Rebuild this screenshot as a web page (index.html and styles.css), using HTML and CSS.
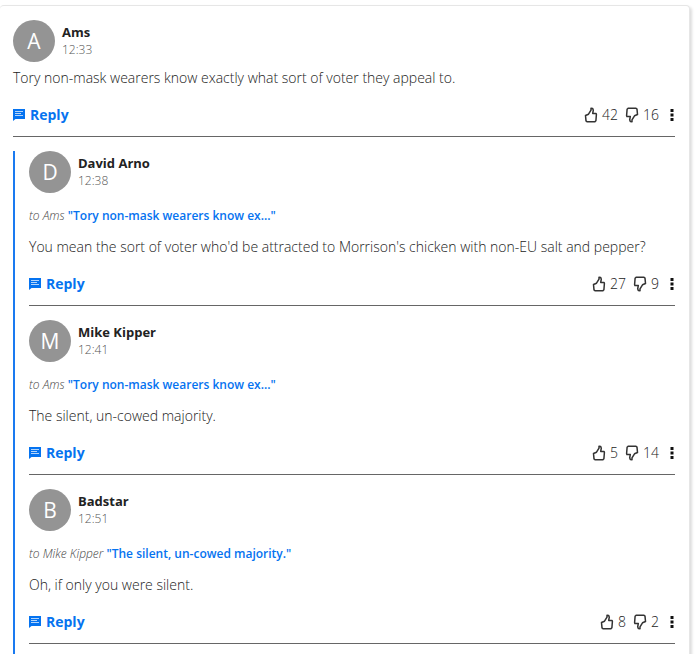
FILE: index.html
```
<!DOCTYPE html>
<html lang="en">
<head>
  <meta charset="UTF-8">
  <meta name="viewport" content="width=device-width, initial-scale=1">
  <title>Comments</title>
  <link rel="stylesheet" href="styles.css">
</head>
<body>
  <!-- shared icons -->
  <svg class="sprite" aria-hidden="true">
    <symbol id="reply" viewBox="0 0 12 12">
      <path fill="currentColor" d="M0 0h12v10H2.500L0 12z"/>
      <path stroke="#fff" stroke-width="1" stroke-opacity=".7" d="M2 2.500h8M2 4.500h6M2 6.500h8"/>
    </symbol>
    <symbol id="like" viewBox="0 0 14 16">
      <path fill="none" stroke="currentColor" stroke-width="1.500" stroke-linejoin="round" d="M1.500 8.500 4.500 7.200l2.500-4V1.300l1.700.3.600 1.600-.6 3.300h3.400l.3 1-.5 6.200-1 1.100H3l-1-.9z"/>
    </symbol>
    <symbol id="dots" viewBox="0 0 4 12">
      <path fill="currentColor" d="M.5 0h3v3h-3zM.5 4.500h3v3h-3zM.5 9h3v3h-3z"/>
    </symbol>
  </svg>

  <main class="card">
    <article class="comment">
      <header class="author">
        <span class="avatar">A</span>
        <div>
          <div class="name">Ams</div>
          <time class="time">12:33</time>
        </div>
      </header>
      <p class="text">Tory non-mask wearers know exactly what sort of voter they appeal to.</p>
      <footer class="actions">
        <button class="reply"><svg class="reply-icon"><use href="#reply"/></svg>Reply</button>
        <button class="vote" aria-label="Like, 42"><svg class="thumb"><use href="#like"/></svg>42</button>
        <button class="vote" aria-label="Dislike, 16"><svg class="thumb down"><use href="#like"/></svg>16</button>
        <button class="more" aria-label="More"><svg class="dots"><use href="#dots"/></svg></button>
      </footer>
    </article>

    <section class="replies">
      <article class="comment">
        <header class="author">
          <span class="avatar">D</span>
          <div>
            <div class="name">David Arno</div>
            <time class="time">12:38</time>
          </div>
        </header>
        <p class="quote"><em>to Ams</em> <a href="#">"Tory non-mask wearers know ex..."</a></p>
        <p class="text">You mean the sort of voter who'd be attracted to Morrison's chicken with non-EU salt and pepper?</p>
        <footer class="actions">
          <button class="reply"><svg class="reply-icon"><use href="#reply"/></svg>Reply</button>
          <button class="vote" aria-label="Like, 27"><svg class="thumb"><use href="#like"/></svg>27</button>
          <button class="vote" aria-label="Dislike, 9"><svg class="thumb down"><use href="#like"/></svg>9</button>
          <button class="more" aria-label="More"><svg class="dots"><use href="#dots"/></svg></button>
        </footer>
      </article>

      <article class="comment">
        <header class="author">
          <span class="avatar">M</span>
          <div>
            <div class="name">Mike Kipper</div>
            <time class="time">12:41</time>
          </div>
        </header>
        <p class="quote"><em>to Ams</em> <a href="#">"Tory non-mask wearers know ex..."</a></p>
        <p class="text">The silent, un-cowed majority.</p>
        <footer class="actions">
          <button class="reply"><svg class="reply-icon"><use href="#reply"/></svg>Reply</button>
          <button class="vote" aria-label="Like, 5"><svg class="thumb"><use href="#like"/></svg>5</button>
          <button class="vote" aria-label="Dislike, 14"><svg class="thumb down"><use href="#like"/></svg>14</button>
          <button class="more" aria-label="More"><svg class="dots"><use href="#dots"/></svg></button>
        </footer>
      </article>

      <article class="comment">
        <header class="author">
          <span class="avatar">B</span>
          <div>
            <div class="name">Badstar</div>
            <time class="time">12:51</time>
          </div>
        </header>
        <p class="quote"><em>to Mike Kipper</em> <a href="#">"The silent, un-cowed majority."</a></p>
        <p class="text">Oh, if only you were silent.</p>
        <footer class="actions">
          <button class="reply"><svg class="reply-icon"><use href="#reply"/></svg>Reply</button>
          <button class="vote" aria-label="Like, 8"><svg class="thumb"><use href="#like"/></svg>8</button>
          <button class="vote" aria-label="Dislike, 2"><svg class="thumb down"><use href="#like"/></svg>2</button>
          <button class="more" aria-label="More"><svg class="dots"><use href="#dots"/></svg></button>
        </footer>
      </article>
    </section>
  </main>
</body>
</html>
```
FILE: styles.css
```
* { box-sizing: border-box; }
body {
  margin: 0;
  padding: 5px 10px 0 0;
  background: #fff;
  color: #222;
  font: 300 14px/20px "Open Sans", "Noto Sans", sans-serif;
}
p { margin: 0; }
button { padding: 0; border: 0; background: none; color: inherit; font: inherit; cursor: pointer; }
.sprite { display: none; }

.card {
  padding: 14px 14px 14px 13px;
  border: 1px solid #e6e6e6;
  border-left: 0;
  border-radius: 4px;
  box-shadow: 2px 2px 3px #ddd;
}
.comment { border-bottom: 1px solid #666; padding-bottom: 11px; }

.author { display: flex; align-items: center; gap: 7px; }
.avatar {
  width: 42px;
  height: 42px;
  border-radius: 50%;
  background: #949494;
  color: #fff;
  font-size: 21px;
  font-weight: 400;
  line-height: 42px;
  text-align: center;
}
.name { color: #222; font-size: 13px; font-weight: 700; line-height: 17px; }
.time { display: block; color: #555; font-size: 12px; line-height: 17px; }

.text { margin: 6px 0 17px; }
.quote { margin: 13px 0 11px; font-size: 12px; }
.quote em { color: #444; }
.quote a { color: #0573f0; font-weight: 600; text-decoration: none; }
.quote + .text { margin-top: 0; }

.actions { display: flex; align-items: center; gap: 7px; }
.reply {
  display: flex;
  align-items: center;
  gap: 5px;
  margin-right: auto;
  color: #0573f0;
  font-weight: 700;
}
.reply-icon { width: 12px; height: 12px; }
.vote { display: flex; align-items: center; gap: 4px; }
.thumb { width: 14px; height: 16px; color: #333; }
.down { transform: rotate(180deg); }
.more { display: flex; margin: 0 1px 0 4px; color: #111; }
.dots { width: 4px; height: 12px; }

/* thread line */
.replies {
  display: grid;
  gap: 14px;
  margin-top: 14px;
  padding: 0 0 14px 14px;
  border-left: 2px solid #1a7af0;
}
```
